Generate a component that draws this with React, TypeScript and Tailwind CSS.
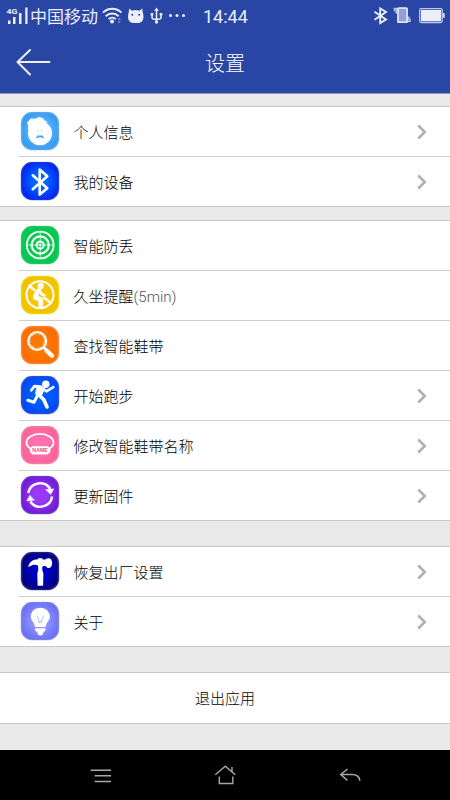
import type {ReactNode} from "react";

type Item = {
	label: string;
	note?: string;
	icon: ReactNode;
	arrow?: boolean;
};

function Tile({id, inner, outer, edge, children}: {id: string; inner: string; outer: string; edge: string; children: ReactNode}) {
	return (
		<svg width="40" height="40" viewBox="-1 -1 40 40" className="-mt-px shrink-0" fill="none" strokeLinecap="round" strokeLinejoin="round">
			<defs>
				<radialGradient id={id} cx="50%" cy="50%" r="65%">
					<stop offset="0.3" stopColor={inner} />
					<stop offset="1" stopColor={outer} />
				</radialGradient>
			</defs>
			<rect x="-0.4" y="-0.2" width="38.8" height="38.6" rx="11.5" fill={edge} opacity="0.4" />
			<rect x="0.8" y="0.8" width="36.4" height="36.6" rx="10.5" fill={`url(#${id})`} stroke={edge} strokeWidth="1.4" />
			{children}
		</svg>
	);
}

const profileIcon = (
	<Tile id="profile" inner="#5cbcff" outer="#2b8df0" edge="#58a8e8">
		<circle cx="19" cy="21.2" r="12" fill="#fff" />
		<path d="M6 10.500 8.500 8.300 9.500 6.500l4.500.3 4-1.800 3.800 1 1.400 2.200L26 9.500 25 14l-16 4.500-2.200-1.800.5-3z" fill="#fff" />
		<circle cx="16.8" cy="18.7" r="0.6" fill="#8ccbf8" />
		<circle cx="21.2" cy="18.7" r="0.6" fill="#8ccbf8" />
		<path d="M14.700 25.400c1.500 0 1.500-2.200 3.200-2.200.6 0 .9.4 1.100.7.2-.3.5-.7 1.200-.7 1.700 0 1.700 2.200 3.100 2.200-1.300.9-3.300.5-4.300-.3-1 .8-3 1.200-4.300.3z" fill="#3fa4f2" />
	</Tile>
);

const bluetoothIcon = (
	<Tile id="bluetooth" inner="#0068ff" outer="#0010ef" edge="#1636d8">
		<path d="M11.700 13.300 26.300 26.200 18.700 32.600V7.600l7.600 6.600-14.600 13" stroke="#fff" strokeWidth="2.6" />
	</Tile>
);

const targetIcon = (
	<Tile id="target" inner="#00cc4e" outer="#00c850" edge="#22c45e">
		<g stroke="#fff">
			<circle cx="19.200" cy="19" r="13.400" strokeWidth="1.900" />
			<circle cx="19.200" cy="19" r="8.600" strokeWidth="2.200" />
			<circle cx="19.200" cy="19" r="3.600" strokeWidth="2" />
			<path d="M19.200 6v26M6 19h26.400" strokeWidth="0.700" />
		</g>
		<circle cx="19.200" cy="19" r="1.200" fill="#fff" />
	</Tile>
);

const sittingIcon = (
	<Tile id="sitting" inner="#f5c800" outer="#f2bc00" edge="#e8d600">
		<circle cx="19" cy="18.700" r="13.500" stroke="#fff" strokeWidth="2" />
		<path d="M8.300 10 13.500 14M23.500 22 30 27" stroke="#fff" strokeWidth="2.600" />
		<circle cx="19.800" cy="9.900" r="3.100" fill="#fff" />
		<path d="M17 12.500c-2 2-4.500 6-4.700 9.300.3 1.700 2 2.300 5.500 2.700v6.300h4v-8.500c-1.800-1-3.800-1.500-5-2l1.700-3.800 2.300 3.500h3.700l-.5-1.600-2.400-.6-2.600-5z" fill="#fff" stroke="#fff" strokeWidth="0.800" />
	</Tile>
);

const searchIcon = (
	<Tile id="search" inner="#ff7900" outer="#f96700" edge="#f58534">
		<circle cx="16.200" cy="15" r="9" stroke="#fff" strokeWidth="2.100" />
		<circle cx="16.200" cy="15" r="7.300" stroke="#fff" strokeWidth="0.600" strokeDasharray="5 2" />
		<path d="m23 21.700 2 2" stroke="#fff" strokeWidth="2.600" />
		<path d="m25.500 24.500 5.600 5.300" stroke="#fff" strokeWidth="4.400" />
	</Tile>
);

const runIcon = (
	<Tile id="run" inner="#0060ff" outer="#0042f4" edge="#2450d4">
		<circle cx="24.800" cy="8.200" r="3.700" fill="#fff" />
		<path d="M10.300 14.300 13.300 10.200 19.500 10.500 25.300 15.300 32.300 11.200" stroke="#fff" strokeWidth="2.700" />
		<path d="m16.500 10 6.800 3-2.800 6.500-4.800.5-1-2.500z" fill="#fff" stroke="#fff" strokeWidth="1" />
		<path d="m17.500 18.500 5.300 5.200L26 31" stroke="#fff" strokeWidth="3.600" />
		<path d="M16.700 19 13 26.200 6.800 24.300" stroke="#fff" strokeWidth="3" />
	</Tile>
);

const nameIcon = (
	<Tile id="name" inner="#ff70ac" outer="#fc5c92" edge="#f080a0">
		<ellipse cx="19" cy="16.500" rx="13.500" ry="8.600" stroke="#fff" strokeWidth="1.800" />
		<path d="M11.500 20.300h15l2.800 1.800v4l-2.800 2.500h-15l-2.600-2.500v-4z" fill="#fff" />
		<text x="19.100" y="26.400" textAnchor="middle" fill="#ef4788" fontSize="5" fontWeight="700" fontFamily="Liberation Sans, sans-serif" textLength="15.500" lengthAdjust="spacingAndGlyphs">
			NAME
		</text>
	</Tile>
);

const updateIcon = (
	<Tile id="update" inner="#9838f8" outer="#6210cc" edge="#6c35c8">
		<g stroke="#fff" strokeWidth="2.400" strokeLinecap="butt">
			<path d="M7.300 17A12 12 0 0 1 29.300 13" />
			<path d="M31.100 20.500A12 12 0 0 1 9.300 25.500" />
		</g>
		<path d="m25 13.600 7.800-.7-3.100 5.300zM13 24.200l-7.200.7L8.800 19.500z" fill="#fff" stroke="#fff" strokeWidth="0.600" />
	</Tile>
);

const hammerIcon = (
	<Tile id="hammer" inner="#0000c4" outer="#00006e" edge="#20207c">
		<path d="M7.300 15C8 10.200 11.500 7.500 17 7.300V6.200h4.500v1.200h2.800c2-1.600 4.800-1.300 6 .3 1.200 2 1.200 5.200-.3 7.200-1.500 1.700-4 1.200-5.500-1h-2.800v1.200H17v-1.700c-2-.9-5.200-.7-6.800.3z" fill="#fff" />
		<path d="M17.200 14h4.100v4l1.100 3.500-.3 12.200h-5.500l-.3-12.200.9-3.500z" fill="#fff" />
	</Tile>
);

const bulbIcon = (
	<Tile id="bulb" inner="#8f94ff" outer="#5d64f2" edge="#7b80e0">
		<path d="M19.300 5.700C13.700 5.700 9.800 9.600 9.800 14.800c0 3.700 3.800 5.700 4.200 10.300h10.600c.4-4.600 4.200-6.600 4.200-10.300 0-5.200-3.900-9.100-9.500-9.100z" fill="#fff" />
		<path d="M14 26.200h10.600l-.4 2.800-1.700 1-.8 2.600-2.400 1.100-2.400-1.100-.8-2.600-1.700-1z" fill="#fff" />
		<path d="m16.500 14 1.600 7 1.200-2.500 1.200 2.500 1.600-7" stroke="#9a9ff7" strokeWidth="0.600" />
	</Tile>
);

const device: Item[] = [
	{label: "个人信息", icon: profileIcon, arrow: true},
	{label: "我的设备", icon: bluetoothIcon, arrow: true},
];

const features: Item[] = [
	{label: "智能防丢", icon: targetIcon},
	{label: "久坐提醒", note: "(5min)", icon: sittingIcon},
	{label: "查找智能鞋带", icon: searchIcon},
	{label: "开始跑步", icon: runIcon, arrow: true},
	{label: "修改智能鞋带名称", icon: nameIcon, arrow: true},
	{label: "更新固件", icon: updateIcon, arrow: true},
];

const system: Item[] = [
	{label: "恢复出厂设置", icon: hammerIcon, arrow: true},
	{label: "关于", icon: bulbIcon, arrow: true},
];

function Group({items}: {items: Item[]}) {
	return (
		<ul className="border-t border-[#c9c9c9] bg-white">
			{items.map((item) => (
				<li key={item.label} className="group flex h-[50px] pl-[19px] last:border-b last:border-[#c9c9c9]">
					<div className="flex flex-1 items-center border-b border-[#cecece] pr-5 pl-px group-last:border-b-0">
						{item.icon}
						<span className="ml-[13.5px] flex-1 text-[15px] leading-5 text-black">
							{item.label}
							{item.note && <span className="font-[Roboto] leading-none font-light text-[#555]">{item.note}</span>}
						</span>
						{item.arrow && (
							<svg width="16" height="18" viewBox="0 0 16 18" fill="none" stroke="#b0b0b0" strokeWidth="2.5">
								<path d="m4.300 2.500 6.500 6.500-6.500 6.500" />
							</svg>
						)}
					</div>
				</li>
			))}
		</ul>
	);
}

function StatusBar() {
	return (
		<div className="flex h-8 items-center text-[#eceffa]">
			<svg width="30" height="32" viewBox="0 0 30 32" fill="currentColor">
				<text x="6.500" y="13.500" fontSize="8" fontWeight="700" fontFamily="Roboto, sans-serif" textLength="11" lengthAdjust="spacingAndGlyphs">
					4G
				</text>
				<path d="M8 20.500h2.500V24H8zM13 17h2.500v7H13zM19 13h2.500v11H19zM25.300 7.500h2.200V24h-2.200z" />
			</svg>
			<span className="w-[72px] text-[17px] leading-6 font-normal whitespace-nowrap">中国移动</span>
			<svg width="86" height="32" viewBox="102 0 86 32" fill="none" stroke="currentColor" strokeWidth="1.900">
				<path d="M103 12.700c5.200-5.200 13.200-5.200 18.400 0M105.700 16.200c3.800-3.600 9.200-3.600 13 0M108.700 19.200c2-1.900 5-1.900 7 0" />
				<circle cx="112" cy="21.500" r="2" fill="currentColor" stroke="none" />
				<path d="m117.500 19.800 1.700-1.700 1.700 1.700zM117.500 21.400l1.700 1.700 1.700-1.700z" fill="currentColor" stroke="none" opacity="0.600" />
				<path
					d="M129.300 8.500 132 10.800c2.500-.6 5-.6 7.500 0l2.700-2.300.6 4c1 3 1 6.500-.5 8.500-1.400 1.700-3 2-6.500 2s-5.200-.3-6.600-2c-1.500-2-1.500-5.500-.5-8.500z"
					fill="currentColor"
					stroke="none"
				/>
				<circle cx="132.300" cy="14.800" r="1" fill="#2946a4" stroke="none" />
				<circle cx="139.200" cy="14.800" r="1" fill="#2946a4" stroke="none" />
				<path d="M156.500 9.500v13M152 13.500v3.700c0 1.300 1 2 2.500 2h4c1.500 0 2.500-.7 2.500-2v-3.700" strokeWidth="1.500" />
				<path d="m156.500 7.500 2.300 3.500h-4.600zM150.700 13h2.600v2.600h-2.600zM159.700 13h2.600v2.600h-2.600z" fill="currentColor" stroke="none" />
				<circle cx="156.500" cy="22" r="1.700" fill="currentColor" stroke="none" />
				<g fill="currentColor" stroke="none">
					<circle cx="170.500" cy="15.500" r="1.500" />
					<circle cx="177" cy="15.500" r="1.500" />
					<circle cx="183.500" cy="15.500" r="1.500" />
				</g>
			</svg>
			<span className="ml-[15px] pt-0.5 font-[Roboto] text-[18px] leading-6 font-normal">14:44</span>
			<svg width="80" height="32" viewBox="370 0 80 32" fill="none" stroke="currentColor" className="ml-auto">
				<path d="m374.500 11.700 11.500 7.800-5.800 3.500V8.500l5.800 3.500-11.500 7.800" strokeWidth="1.900" />
				<rect x="397.900" y="8" width="9.200" height="14.200" rx="0.800" fill="#93a2d5" strokeWidth="1.600" />
				<path d="M394.500 8v3.500M396.200 9v4.500M408.800 16.500v4M410 18.500v3.500M393.500 8.500h4M407 21.500h3.500" strokeWidth="1.500" opacity="0.700" />
				<rect x="419.700" y="8.700" width="22.500" height="13.800" rx="1.500" stroke="#c0c9eb" strokeWidth="1.300" />
				<rect x="421" y="10" width="20" height="11.200" fill="currentColor" stroke="none" />
				<path d="M443.700 13.200v4.500" strokeWidth="1.800" />
			</svg>
		</div>
	);
}

export default function App() {
	return (
		<main className="flex h-[800px] w-[450px] flex-col bg-[#eaeaea] font-['Noto_Sans_CJK_SC',sans-serif] font-light">
			<header className="h-[94px] border-b border-[#8795cc] bg-[#2946a4] text-white">
				<StatusBar />
				<div className="grid h-[61px] grid-cols-3 items-center">
					<svg width="56" height="32" viewBox="0 0 56 32" fill="none" stroke="#eef1fb" strokeWidth="2" strokeLinecap="round" strokeLinejoin="round">
						<path d="M30 3 17.500 15 30 27.500M17.500 15H49.500" />
					</svg>
					<h1 className="text-center text-[20px] leading-6">设置</h1>
				</div>
			</header>
			<div className="mt-3 flex flex-col">
				<Group items={device} />
				<div className="mt-[13px]">
					<Group items={features} />
				</div>
				<div className="mt-[25px]">
					<Group items={system} />
				</div>
				<button className="mt-[25px] h-[52px] border-y border-[#c9c9c9] bg-white text-[15px] text-black">退出应用</button>
			</div>
			<nav className="mt-auto flex h-[50px] justify-between bg-black px-[84px]">
				<svg width="34" height="50" viewBox="84 0 34 50" stroke="#a8a8a8" strokeWidth="1.500">
					<path d="M90.700 20.200H111M94.700 25.800H111M94.700 31.600H111" />
				</svg>
				<svg width="34" height="50" viewBox="208 0 34 50" fill="none" stroke="#a8a8a8" strokeWidth="1.400">
					<path d="m215.300 24.700 10-8.500 10 8.500M219.300 26.500v7h13.500v-7M232 17v4.500" />
				</svg>
				<svg width="34" height="50" viewBox="332 0 34 50" fill="none" stroke="#a8a8a8" strokeWidth="1.500">
					<path d="m347.500 19-6.700 5.500 6.700 6M341 24.500h11c4.500 0 7.500 2.500 7.800 6.300" />
				</svg>
			</nav>
		</main>
	);
}
